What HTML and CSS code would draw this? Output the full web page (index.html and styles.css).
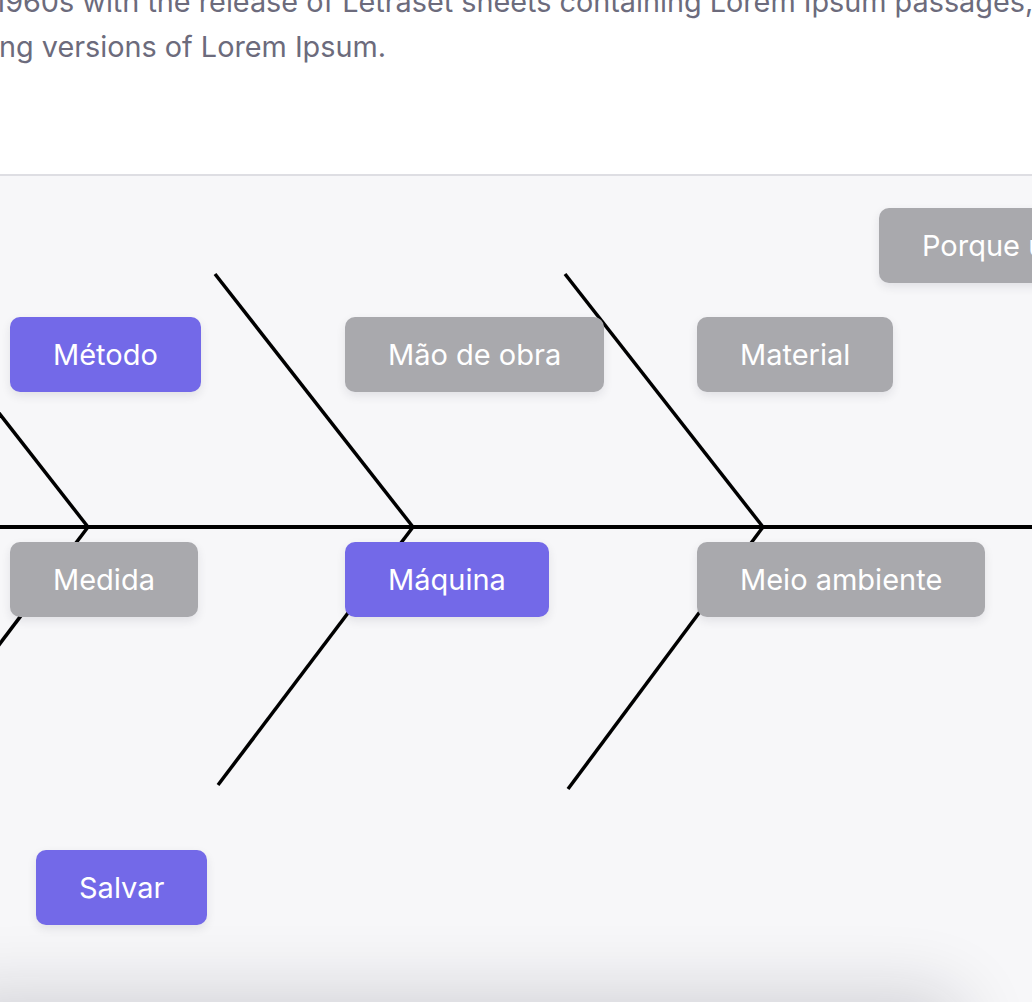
FILE: index.html
```html
<!DOCTYPE html>
<html lang="pt-BR">
<head>
<meta charset="utf-8">
<title>Diagrama de Ishikawa</title>
<link rel="stylesheet" href="styles.css">
</head>
<body>
<div class="viewport">
  <p class="intro">in the 1960s with the release of Letraset sheets containing Lorem Ipsum passages, and more recently with desktop publishing software like Aldus PageMaker<br>including versions of Lorem Ipsum.</p>

  <section class="board">
    <div class="canvas">
      <svg class="bones" width="1032" height="644" viewBox="0 0 1032 644" aria-hidden="true">
        <line class="spine" x1="-10" y1="351" x2="1042" y2="351"/>
        <line x1="-30" y1="200" x2="88" y2="351"/>
        <line x1="88" y1="351" x2="-20" y2="494"/>
        <line x1="215" y1="98" x2="413" y2="351"/>
        <line x1="413" y1="351" x2="218" y2="609"/>
        <line x1="565" y1="98" x2="763" y2="351"/>
        <line x1="763" y1="351" x2="568" y2="613"/>
      </svg>
      <button class="node muted node-porque">Porque usar</button>
      <button class="node active node-metodo">Método</button>
      <button class="node muted node-mao">Mão de obra</button>
      <button class="node muted node-material">Material</button>
      <button class="node muted node-medida">Medida</button>
      <button class="node active node-maquina">Máquina</button>
      <button class="node muted node-meio">Meio ambiente</button>
    </div>
    <div class="actions">
      <button class="node active">Salvar</button>
    </div>
  </section>
  <div class="next-card"></div>
</div>
</body>
</html>
```

FILE: styles.css
```css
html, body {
  margin: 0;
  padding: 0;
  overflow: hidden;
  background: #ffffff;
}

body {
  font-family: "Inter", "Noto Sans", sans-serif;
}

.viewport {
  width: 1032px;
  height: 1002px;
  overflow: hidden;
}

.intro {
  margin: -21px 0 105px -90px;
  font-size: 28.8px;
  line-height: 45px;
  color: #6c6b7c;
  white-space: nowrap;
}

.board {
  border-top: 2px solid #dedee3;
  background: #f7f7f9;
  height: 826px;
  display: flex;
  flex-direction: column;
}

.canvas {
  position: relative;
  height: 644px;
}

.bones {
  position: absolute;
  left: 0;
  top: 0;
  overflow: visible;
}

.bones line {
  stroke: #000000;
  stroke-width: 3.5;
  stroke-linecap: butt;
}

.bones .spine {
  stroke-width: 4;
}

.node {
  font-family: inherit;
  font-size: 29px;
  color: #ffffff;
  border: none;
  border-radius: 10px;
  height: 75px;
  padding: 0 43px;
  box-shadow: 0 4px 10px rgba(40, 40, 60, 0.10);
  white-space: nowrap;
  cursor: pointer;
}

.canvas .node {
  position: absolute;
}

.active {
  background: #7369e8;
}

.muted {
  background: #a9a9ad;
}

.node-porque { left: 879px; top: 32px; }
.node-metodo { left: 10px; top: 141px; }
.node-mao { left: 345px; top: 141px; }
.node-material { left: 697px; top: 141px; }
.node-medida { left: 10px; top: 366px; }
.node-maquina { left: 345px; top: 366px; }
.node-meio { left: 697px; top: 366px; }

.actions {
  padding: 30px 0 0 36px;
}

.next-card {
  margin: 0 70px 0 -60px;
  height: 300px;
  background: #ffffff;
  border-radius: 30px;
  box-shadow: 0 -10px 70px rgba(20, 20, 40, 0.16);
}
```
